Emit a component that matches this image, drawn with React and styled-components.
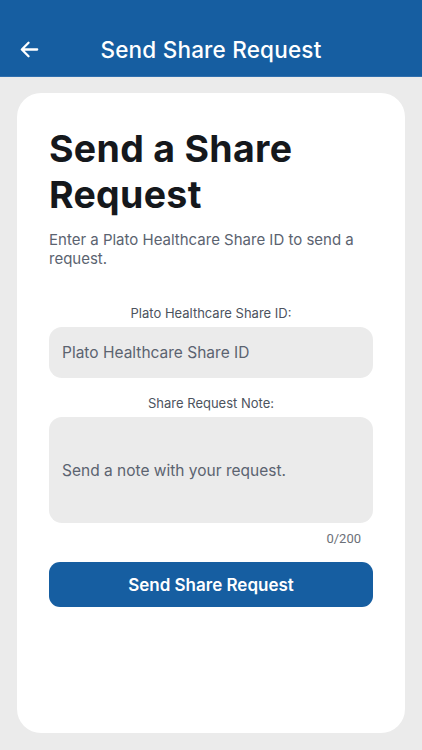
import React from "react";
import styled, { createGlobalStyle } from "styled-components";

const Global = createGlobalStyle`
  html, body { margin: 0; padding: 0; background: #ebebeb; }
  body { font-family: "Inter", "Noto Sans", sans-serif; -webkit-font-smoothing: antialiased; }
  * { box-sizing: border-box; }
`;

const Page = styled.div`
  width: 422px;
  height: 750px;
  background: #ebebeb;
  display: flex;
  flex-direction: column;
`;

const Header = styled.header`
  height: 77px;
  background: #165ea1;
  display: grid;
  grid-template-columns: 60px 1fr 60px;
  align-items: center;
  padding-top: 22px;
  border-bottom: 1px solid #2f6fae;
`;

const BackButton = styled.button`
  background: none;
  border: none;
  padding: 0 0 0 18px;
  display: flex;
  align-items: center;
  cursor: pointer;
`;

const HeaderTitle = styled.h1`
  margin: 0;
  text-align: center;
  color: #ffffff;
  font-size: 22.5px;
  font-weight: 500;
  letter-spacing: 0.2px;
`;

const Body = styled.main`
  flex: 1;
  padding: 16px 17px 17px;
  display: flex;
`;

const Card = styled.section`
  flex: 1;
  background: #ffffff;
  border-radius: 24px;
  padding: 33px 32px 28px;
  display: flex;
  flex-direction: column;
`;

const Heading = styled.h2`
  margin: 0;
  font-size: 37.5px;
  line-height: 46px;
  font-weight: 700;
  color: #15181c;
  letter-spacing: 0.3px;
`;

const Intro = styled.p`
  margin: 12px 0 0;
  font-size: 15px;
  line-height: 19px;
  color: #5b6370;
`;

const Label = styled.label`
  display: block;
  text-align: center;
  font-size: 13px;
  color: #4c535e;
  margin: ${(p) => p.$top}px 0 6px;
`;

const Field = styled.div`
  background: #ebebeb;
  border-radius: 13px;
  height: ${(p) => p.$h}px;
  display: flex;
  align-items: center;
  padding: 0 13px;
  font-size: 15.5px;
  color: #5b6370;
`;

const Counter = styled.div`
  text-align: right;
  font-family: "Roboto", sans-serif;
  font-size: 13px;
  color: #6b7078;
  margin: 8px 12px 0 0;
`;

const Submit = styled.button`
  margin-top: 16px;
  height: 45px;
  border: none;
  border-radius: 11px;
  background: #165ea1;
  color: #ffffff;
  font-family: "Inter", sans-serif;
  font-size: 17px;
  font-weight: 600;
  cursor: pointer;
`;

export default function App() {
  return (
    <Page>
      <Global />
      <Header>
        <BackButton aria-label="Back">
          <svg width="23" height="23" viewBox="0 0 24 24" fill="none">
            <path d="M20 12H4.5M11 5l-7 7 7 7" stroke="#fff" strokeWidth="2.4" strokeLinecap="round" strokeLinejoin="round" />
          </svg>
        </BackButton>
        <HeaderTitle>Send Share Request</HeaderTitle>
        <span />
      </Header>
      <Body>
        <Card>
          <Heading>Send a Share Request</Heading>
          <Intro>Enter a Plato Healthcare Share ID to send a request.</Intro>
          <Label $top={37}>Plato Healthcare Share ID:</Label>
          <Field $h={51}>Plato Healthcare Share ID</Field>
          <Label $top={17}>Share Request Note:</Label>
          <Field $h={106}>Send a note with your request.</Field>
          <Counter>0/200</Counter>
          <Submit>Send Share Request</Submit>
        </Card>
      </Body>
    </Page>
  );
}
